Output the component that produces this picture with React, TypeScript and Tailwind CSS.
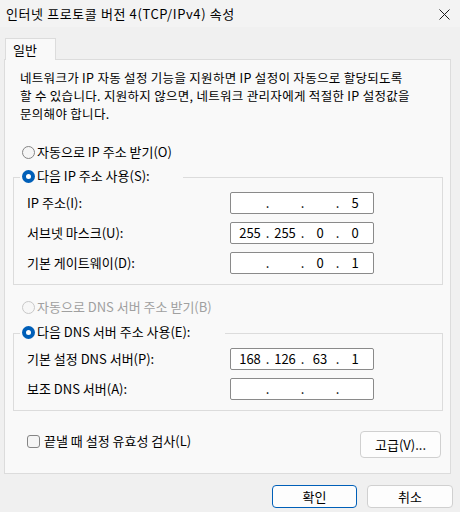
import React from 'react';

const font = { fontFamily: '"Noto Sans CJK KR", "Noto Sans", sans-serif' };

function Radio({ checked, disabled, label }: { checked?: boolean; disabled?: boolean; label: string }) {
  return (
    <div className="flex h-4 items-center">
      {checked ? (
        <span className="flex h-[13px] w-[13px] shrink-0 items-center justify-center rounded-full bg-[#005fb8]">
          <span className="h-[5px] w-[5px] rounded-full bg-white" />
        </span>
      ) : (
        <span
          className={
            disabled
              ? 'h-[13px] w-[13px] shrink-0 rounded-full border border-[#c8c8c8] bg-[#f7f7f7]'
              : 'h-[13px] w-[13px] shrink-0 rounded-full border border-[#858585] bg-[#f5f5f5]'
          }
        />
      )}
      <span className={disabled ? 'ml-[2px] whitespace-nowrap text-[#a0a0a0]' : 'ml-[2px] whitespace-nowrap text-black'}>
        {label}
      </span>
    </div>
  );
}

function IpField({ parts }: { parts: string[] }) {
  return (
    <div className="flex h-[22px] w-[144px] items-center rounded-[2px] border border-[#8a8a8a] bg-white pl-[4px]">
      {parts.map((p, i) => (
        <React.Fragment key={i}>
          <span className="w-[30px] text-center">{p}</span>
          {i < 3 && <span className="w-[5px] text-center">.</span>}
        </React.Fragment>
      ))}
    </div>
  );
}

function FieldRow({ label, parts }: { label: string; parts: string[] }) {
  return (
    <div className="flex items-center pl-[13px]">
      <span className="w-[203px] whitespace-nowrap">{label}</span>
      <IpField parts={parts} />
    </div>
  );
}

function GroupBox({ legend, legendWidth, children }: { legend: string; legendWidth: string; children: React.ReactNode }) {
  return (
    <fieldset className="ml-[8px] w-[430px] border border-[#dcdcdc] px-0 pb-[10px]">
      <legend className={`ml-[6px] h-[18px] pl-[2px] ${legendWidth}`}>
        <Radio checked label={legend} />
      </legend>
      <div className="flex flex-col gap-[8px] pt-[6px]">{children}</div>
    </fieldset>
  );
}

export default function App() {
  return (
    <div className="h-[512px] w-[460px] bg-[#f0f0f0] text-[13px] leading-4 text-black" style={font}>
      {/* title bar */}
      <div className="flex h-[27px] items-center justify-between bg-[#f3f3f3] pl-[6px] pr-[10px]">
        <span className="tracking-[0.6px]">인터넷 프로토콜 버전 4(TCP/IPv4) 속성</span>
        <svg width="11" height="11" viewBox="0 0 11 11" className="mt-[1px]">
          <path d="M0.5 0.5 L10.5 10.5 M10.5 0.5 L0.5 10.5" stroke="#1b1b1b" strokeWidth="1" fill="none" />
        </svg>
      </div>

      {/* tab */}
      <div className="relative z-10 mt-[11px] ml-[5px] flex h-[22px] w-[51px] items-center border border-b-0 border-[#dcdcdc] bg-[#f9f9f9] pl-[7px]">
        일반
      </div>

      {/* tab panel */}
      <div className="-mt-px ml-[4px] w-[447px] border border-[#dcdcdc] bg-[#f9f9f9] pt-[9px] pb-[15px]">
        <p className="ml-[15px] whitespace-nowrap text-[12.5px] leading-[18px] tracking-[0.3px]">
          네트워크가 IP 자동 설정 기능을 지원하면 IP 설정이 자동으로 할당되도록
          <br />
          할 수 있습니다. 지원하지 않으면, 네트워크 관리자에게 적절한 IP 설정값을
          <br />
          문의해야 합니다.
        </p>

        <div className="mt-[21px] ml-[17px]">
          <Radio label="자동으로 IP 주소 받기(O)" />
        </div>

        <div className="mt-[8px]">
          <GroupBox legend="다음 IP 주소 사용(S):" legendWidth="w-[163px]">
            <FieldRow label="IP 주소(I):" parts={['', '', '', '5']} />
            <FieldRow label="서브넷 마스크(U):" parts={['255', '255', '0', '0']} />
            <FieldRow label="기본 게이트웨이(D):" parts={['', '', '0', '1']} />
          </GroupBox>
        </div>

        <div className="mt-[14px] ml-[17px]">
          <Radio disabled label="자동으로 DNS 서버 주소 받기(B)" />
        </div>

        <div className="mt-[9px]">
          <GroupBox legend="다음 DNS 서버 주소 사용(E):" legendWidth="w-[205px]">
            <FieldRow label="기본 설정 DNS 서버(P):" parts={['168', '126', '63', '1']} />
            <FieldRow label="보조 DNS 서버(A):" parts={['', '', '', '']} />
          </GroupBox>
        </div>

        <div className="mt-[20px] flex items-start">
          <label className="mt-[2px] ml-[22px] flex h-4 items-center">
            <span className="h-[13px] w-[13px] rounded-[3px] border border-[#858585] bg-[#f5f5f5]" />
            <span className="ml-[4px]">끝낼 때 설정 유효성 검사(L)</span>
          </label>
          <button className="mr-[9px] ml-auto h-[27px] w-[81px] rounded-[4px] border border-[#d0d0d0] bg-[#fdfdfd]">
            고급(V)...
          </button>
        </div>
      </div>

      {/* dialog buttons */}
      <div className="mt-[11px] mr-[7px] flex justify-end gap-[10px]">
        <button className="h-[23px] w-[85px] rounded-[4px] border border-[#005fb8] bg-[#fdfdfd]">확인</button>
        <button className="h-[23px] w-[86px] rounded-[4px] border border-[#d0d0d0] bg-[#fdfdfd]">취소</button>
      </div>
    </div>
  );
}
